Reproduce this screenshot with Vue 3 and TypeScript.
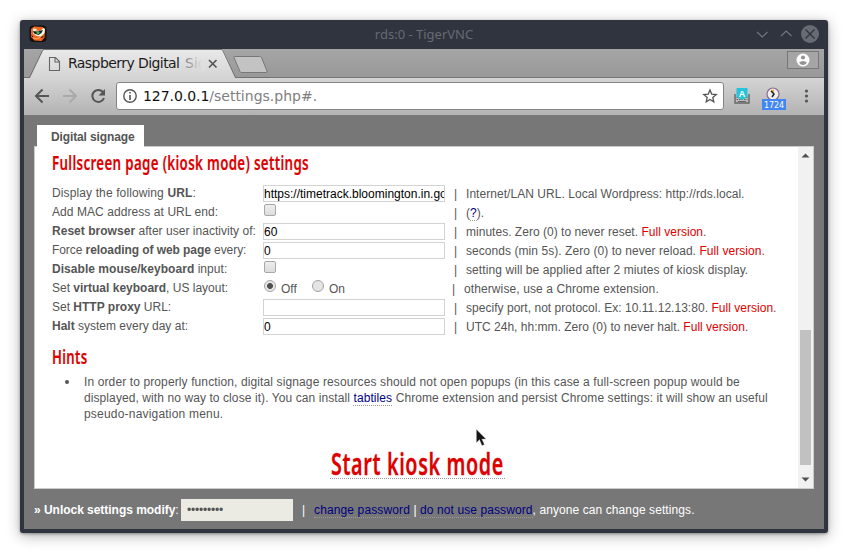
<script setup lang="ts">
interface Part { t: string; k?: 'b' | 'red' | 'link' }
interface Row { label: Part[]; kind: 'text' | 'check' | 'radio'; value?: string; note: Part[]; ls: number; ns: number }

const full: Part = { t: 'Full version', k: 'red' }
const rows: Row[] = [
  { label: [{ t: 'Display the following ' }, { t: 'URL', k: 'b' }, { t: ':' }], kind: 'text', value: 'https://timetrack.bloomington.in.gov', note: [{ t: 'Internet/LAN URL. Local Wordpress: http://rds.local.' }], ls: 0.12, ns: 0.05 },
  { label: [{ t: 'Add MAC address at URL end:' }], kind: 'check', note: [{ t: '(' }, { t: '?', k: 'link' }, { t: ').' }], ls: 0.07, ns: 0 },
  { label: [{ t: 'Reset browser', k: 'b' }, { t: ' after user inactivity of:' }], kind: 'text', value: '60', note: [{ t: 'minutes. Zero (0) to never reset. ' }, full, { t: '.' }], ls: 0.03, ns: 0.02 },
  { label: [{ t: 'Force ' }, { t: 'reloading of web page', k: 'b' }, { t: ' every:' }], kind: 'text', value: '0', note: [{ t: 'seconds (min 5s). Zero (0) to never reload. ' }, full, { t: '.' }], ls: -0.07, ns: 0.06 },
  { label: [{ t: 'Disable mouse/keyboard', k: 'b' }, { t: ' input:' }], kind: 'check', note: [{ t: 'setting will be applied after 2 miutes of kiosk display.' }], ls: 0.04, ns: 0.09 },
  { label: [{ t: 'Set ' }, { t: 'virtual keyboard', k: 'b' }, { t: ', US layout:' }], kind: 'radio', note: [{ t: 'otherwise, use a Chrome extension.' }], ls: 0, ns: 0.1 },
  { label: [{ t: 'Set ' }, { t: 'HTTP proxy', k: 'b' }, { t: ' URL:' }], kind: 'text', value: '', note: [{ t: 'specify port, not protocol. Ex: 10.11.12.13:80. ' }, full, { t: '.' }], ls: 0, ns: 0.03 },
  { label: [{ t: 'Halt', k: 'b' }, { t: ' system every day at:' }], kind: 'text', value: '0', note: [{ t: 'UTC 24h, hh:mm. Zero (0) to never halt. ' }, full, { t: '.' }], ls: 0, ns: 0.015 },
]
</script>

<template>
  <div class="desk">
    <div class="window">
      <header class="titlebar">
        <svg class="tiger" width="18" height="18" viewBox="0 0 18 18">
          <rect x=".5" y=".5" width="17" height="16.5" rx="4" fill="#15100d" />
          <path d="M2 4 5 1.500l8.500.5L16 4l-.5 8.500-3 3.500-7-.5L2 12Z" fill="#ef6820" />
          <path d="M4 3.500 8 4l-1.500 1.500L11 6l3.500-3L16 4l-.5 4-3.500 3.500-4.500-.5L4 8.500Z" fill="#f6f4ee" />
          <path d="M4 6 8 6.500 14 5l-1.500 3-3 2L5 8.500Z" fill="#17251e" />
          <circle cx="9" cy="7.800" r="1.500" fill="#43b05c" />
          <path d="M4 13q4 2 7-.5" stroke="#f7a866" fill="none" />
          <path d="M2.500 10.500 4 12m8 .5 2.500-1" stroke="#251008" fill="none" />
        </svg>
        <span class="caption">rds:0 - TigerVNC</span>
        <svg class="controls" width="64" height="20" viewBox="0 0 64 20" fill="none">
          <path d="m1 8 5.200 5L11.500 8M25 12l5.200-5 5.300 5" stroke="#747780" stroke-width="1.100" />
          <circle cx="54" cy="10" r="9" fill="#676b74" />
          <path d="m49.500 5.500 9 9m0-9-9 9" stroke="#2f343f" stroke-width="1.300" />
        </svg>
      </header>

      <div class="strip">
        <svg class="tabshape" width="246" height="29" viewBox="0 0 246 29">
          <defs>
            <linearGradient id="tabfill" x1="0" y1="0" x2="0" y2="1">
              <stop offset="0" stop-color="#e9e9e9" /><stop offset="1" stop-color="#d4d4d4" />
            </linearGradient>
            <linearGradient id="fade" gradientUnits="userSpaceOnUse" x1="158" y1="0" x2="178" y2="0">
              <stop offset="0" stop-color="#747474" /><stop offset="1" stop-color="#dfdfdf" />
            </linearGradient>
          </defs>
          <path d="M0 28.500h5.500L18.500 1.500q.4-1 1.500-1H197q1 0 1.500 1l12.500 26 1 1h34" fill="none" stroke="#707070" />
          <path d="M6 29 19 2q.4-1 1.500-1H197q1 0 1.500 1l12.500 27Z" fill="url(#tabfill)" />
          <path d="M25.500 8.500h6l4 4v9h-10zM31 8.500v4.500h4.500" fill="none" stroke="#666" stroke-width="1.100" />
          <text x="44" y="19" class="tabtext" textLength="112" fill="#1c1c1c">Raspberry Digital</text>
          <text x="161" y="19" class="tabtext" fill="url(#fade)">Sig</text>
          <path d="m185 11 7.500 7.500m0-7.500-7.500 7.500" stroke="#555" stroke-width="1.700" />
          <path d="M210 8.500q-.5-1 .5-1h25q1.500 0 2 1l5.500 13.500q.5 1.500-1 1.500h-24q-1.500 0-2-1Z" fill="#c3c3c3" stroke="#777" />
        </svg>
        <div class="profile">
          <svg width="14" height="14" viewBox="0 0 14 14">
            <circle cx="7" cy="7" r="6.500" fill="#fff" />
            <circle cx="7" cy="4.500" r="2.100" fill="#949494" />
            <path d="M3 9.500q4-3 8 0-1.500 2.500-4 2.500T3 9.500Z" fill="#949494" />
          </svg>
        </div>
      </div>

      <div class="toolbar">
        <svg class="nav" width="86" height="36" viewBox="0 0 86 36" fill="none">
          <path d="M25 18H12m6.500-6.500L12 18l6.500 6.500" stroke="#555" stroke-width="2" />
          <path d="M39 18h13m-6.500-6.500L52 18l-6.500 6.500" stroke="#a9a9a9" stroke-width="2" />
          <path d="M79.300 14.500A6 6 0 1 0 80 20" stroke="#555" stroke-width="2" />
          <path d="M81 11v6.500h-6.500Z" fill="#555" />
        </svg>
        <div class="omnibox">
          <svg width="14" height="14" viewBox="0 0 14 14">
            <circle cx="7" cy="7" r="6.200" fill="none" stroke="#555" stroke-width="1.400" />
            <path d="M7 3v1.600M7 6v5" stroke="#555" stroke-width="1.600" />
          </svg>
          <span class="url"><b>127.0.0.1</b>/settings.php#.</span>
          <svg class="star" width="14" height="14" viewBox="0 0 14 14">
            <path d="m7 1 1.700 4.100 4.500.4-3.400 2.900 1 4.400L7 10.500l-3.800 2.300 1-4.400L.8 5.500l4.500-.4Z" fill="none" stroke="#555" stroke-width="1.300" />
          </svg>
        </div>
        <svg class="exts" width="92" height="36" viewBox="0 0 92 36">
          <path d="M7 18h14v6H7Z" fill="#bbb" />
          <path d="M7 16v9h14v-9" fill="none" stroke="#666" stroke-width="1.400" />
          <path d="M8.500 19.500h11M8.500 21.500h11" stroke="#666" stroke-width="1" stroke-dasharray="1.500 1" />
          <path d="M10 23.500h8" stroke="#666" />
          <path d="M8.500 10h11v9l-5.500 3-5.500-3Z" fill="#27c3dc" />
          <text x="14" y="18.500" text-anchor="middle" class="exta">A</text>
          <circle cx="45" cy="16" r="6" fill="#f1eeee" stroke="#896a91" stroke-width="1.200" />
          <path d="M46 16V11.500a4.500 4.500 0 0 0-3.300 1Z" fill="#e7a83d" />
          <path d="m43 13 3 3-2 3" stroke="#222" stroke-width="1.500" fill="none" />
          <rect x="34" y="21" width="24" height="11" fill="#4285f4" />
          <text x="36" y="29.500" class="badge" textLength="20">1724</text>
          <circle cx="78.500" cy="13" r="1.600" fill="#555" /><circle cx="78.500" cy="18" r="1.600" fill="#555" /><circle cx="78.500" cy="23" r="1.600" fill="#555" />
        </svg>
      </div>

      <main class="page">
        <div class="pagetab">Digital signage</div>
        <div class="panel">
          <div class="content">
            <svg class="h first" width="270" height="28"><text x="0" y="18" textLength="257" lengthAdjust="spacingAndGlyphs">Fullscreen page (kiosk mode) settings</text></svg>
            <div class="rows">
              <div v-for="(r, i) in rows" :key="i" class="row">
                <div class="label" :style="{ letterSpacing: r.ls + 'px' }"><span v-for="(p, j) in r.label" :key="j" :class="p.k">{{ p.t }}</span></div>
                <div class="field">
                  <div v-if="r.kind === 'text'" class="input">{{ r.value }}</div>
                  <i v-else-if="r.kind === 'check'" class="check"></i>
                  <template v-else>
                    <i class="radio on"></i><span class="opt">Off</span><i class="radio"></i><span class="opt">On</span>
                  </template>
                </div>
                <div class="note" :class="{ near: r.kind === 'radio' }" :style="{ letterSpacing: r.ns + 'px' }">
                  <span class="pipe">|</span><span v-for="(p, j) in r.note" :key="j" :class="p.k">{{ p.t }}</span>
                </div>
              </div>
            </div>
            <svg class="h second" width="270" height="28"><text x="0" y="18" textLength="35.500" lengthAdjust="spacingAndGlyphs">Hints</text></svg>
            <div class="hint">
              <i class="dot"></i>
              <p>
                <span class="l1">In order to properly function, digital signage resources should not open popups (in this case a full-screen popup would be</span><br>
                <span class="l2">displayed, with no way to close it). You can install <span class="link">tabtiles</span> Chrome extension and persist Chrome settings: it will show an useful</span><br>
                <span class="l3">pseudo-navigation menu.</span>
              </p>
            </div>
            <a class="start"><svg width="175" height="34"><text x="1" y="31" textLength="173" lengthAdjust="spacingAndGlyphs">Start kiosk mode</text></svg></a>
            <svg class="cursor" width="12" height="18" viewBox="0 0 12 18"><path d="M.5.5v13l3-3 2.500 6 2.300-1-2.500-5.500h4Z" fill="#151515" stroke="#999" stroke-width=".4" /></svg>
          </div>
          <div class="scroll">
            <svg width="9" height="5" viewBox="0 0 9 5"><path d="M.5 4.500 4.500.5l4 4Z" fill="#505050" /></svg>
            <div class="thumb"></div>
            <svg width="9" height="5" viewBox="0 0 9 5"><path d="M.5.5h8l-4 4Z" fill="#505050" /></svg>
          </div>
        </div>
        <footer class="foot">
          <span class="unlock"><b>» Unlock settings modify</b>:</span>
          <span class="pass">•••••••••</span>
          <span class="bar">|</span>
          <span class="actions"><span class="link pw">change password</span> | <span class="link">do not use password</span>, anyone can change settings.</span>
        </footer>
      </main>
    </div>
  </div>
</template>

<style>
body { background: #fff; overflow: hidden; }
</style>

<style scoped>
.desk { width: 848px; height: 553px; padding: 20px; box-sizing: border-box; font: 12px/19px "Liberation Sans", Arial, sans-serif; color: #555; }
.desk svg { display: block; flex: none; overflow: visible; }
.window { width: 808px; height: 513px; box-sizing: border-box; padding: 0 4px 4px; background: #2f343f; border-radius: 3px; box-shadow: 0 1px 3px rgba(0,0,0,.35), 0 3px 14px rgba(0,0,0,.3); }
.titlebar { height: 29px; display: grid; grid-template-columns: 1fr auto 1fr; align-items: center; }
.tiger { margin-left: 5px; margin-top: -1px; }
.caption { font: 13px/29px "Noto Sans", sans-serif; color: #676a73; white-space: nowrap; }
.controls { justify-self: end; margin: -1px 4px 0 0; }
.strip { height: 29px; box-sizing: border-box; background: linear-gradient(#a5a5a5, #999); border-bottom: 1px solid #777; display: flex; justify-content: space-between; }
.tabshape { height: 29px; }
.tabtext { font: 14px "DejaVu Sans", sans-serif; }
.profile { width: 32px; height: 18px; box-sizing: border-box; margin: 2px 5px 0 0; border: 1px solid #777; background: #a5a5a5; display: grid; place-items: center; }
.toolbar { height: 37px; box-sizing: border-box; display: flex; background: linear-gradient(#d4d4d4, #b3b3b3); }
.omnibox { margin: 4px 0 0 6px; width: 608px; height: 28px; box-sizing: border-box; border: 1px solid #858585; border-radius: 3px; background: #fff; display: flex; align-items: center; padding: 0 6px; }
.url { font: 14px/26px "DejaVu Sans", sans-serif; color: #808080; margin-left: 6px; flex: 1; }
.url b { font-weight: 400; color: #111; letter-spacing: -.06px; }
.exta { font: bold 9px "Liberation Sans", sans-serif; fill: #fff; }
.badge { font: 8px "DejaVu Sans", sans-serif; fill: #fff; }
.exts { margin-left: 4px; }
.page { height: 414px; background: #777; padding: 10px 10px 0; box-sizing: border-box; }
.pagetab { position: relative; z-index: 1; width: 107px; height: 22px; box-sizing: border-box; margin-left: 3px; padding-left: 14px; background: #fff; font-weight: bold; line-height: 24px; letter-spacing: -.12px; white-space: nowrap; }
.panel { margin-top: -1px; width: 780px; height: 343px; box-sizing: border-box; border: 1px solid #ccc; background: #fff; display: flex; }
.content { position: relative; width: 763px; padding-left: 17px; box-sizing: border-box; }
.scroll { width: 15px; background: #f1f1f1; display: flex; flex-direction: column; align-items: center; padding: 6px 0; box-sizing: border-box; }
.thumb { width: 11px; height: 135px; margin: 172px 0 auto; background: #c1c1c1; }
.h text { font: 600 20px "Noto Sans", sans-serif; letter-spacing: .5px; fill: #dd0000; stroke: #dd0000; stroke-width: .2px; }
.desk .h { height: 28px; }
.first { margin-top: 5px; }
.rows { margin-top: 4px; }
.row { display: flex; height: 19px; white-space: pre; }
.label { width: 211px; }
.field { width: 182px; display: flex; }
.b { font-weight: bold; }
.red { color: #df0000; }
.link { color: #00007f; border-bottom: 1px dotted #999; }
.input { width: 182px; height: 17px; margin-top: 1px; box-sizing: border-box; border: 1px solid #d3d3d3; color: #000; line-height: 17px; overflow: hidden; }
.check { width: 12px; height: 12px; box-sizing: border-box; border: 1px solid #a8a8a8; border-radius: 2px; background: linear-gradient(#eee, #dcdcdc); margin: 1px 0 0 1px; }
.radio { width: 12px; height: 12px; box-sizing: border-box; border: 1px solid #a3a3a3; border-radius: 50%; background: #e4e4e4; margin: 1px 5px 0 1px; }
.radio.on { background: radial-gradient(circle, #505050 2.600px, #e8e8e8 3.300px); }
.opt { width: 30px; line-height: 21px; }
.note { margin-left: 9px; line-height: 21px; }
.note.near { margin-left: 7px; }
.pipe { display: inline-block; width: 12px; }
.second { margin-top: 10px; }
.hint { display: flex; line-height: 16px; white-space: nowrap; }
.hint p { margin: 0 0 0 15px; }
.l1 { letter-spacing: .115px; }
.l2 { letter-spacing: .088px; }
.l3 { letter-spacing: .2px; }
.dot { width: 4px; height: 4px; border-radius: 50%; background: #555; margin: 6px 0 0 13px; }
.start { display: block; width: 175px; margin: 22px 0 0 278px; border-bottom: 1px dotted #999; }
.start text { font: 600 30px "Noto Sans", sans-serif; letter-spacing: 1px; fill: #dd0000; stroke: #dd0000; stroke-width: .3px; }
.cursor { position: absolute; left: 441px; top: 282px; }
.foot { display: flex; color: #fff; white-space: pre; line-height: 22px; padding-top: 10px; }
.unlock { width: 147px; letter-spacing: -.03px; }
.pass { width: 112px; height: 22px; box-sizing: border-box; background: #ebebe4; color: #545454; padding-left: 6px; letter-spacing: -.2px; }
.bar { width: 12px; margin-left: 9px; }
.actions { letter-spacing: .09px; }
.pw { letter-spacing: .13px; }
</style>
